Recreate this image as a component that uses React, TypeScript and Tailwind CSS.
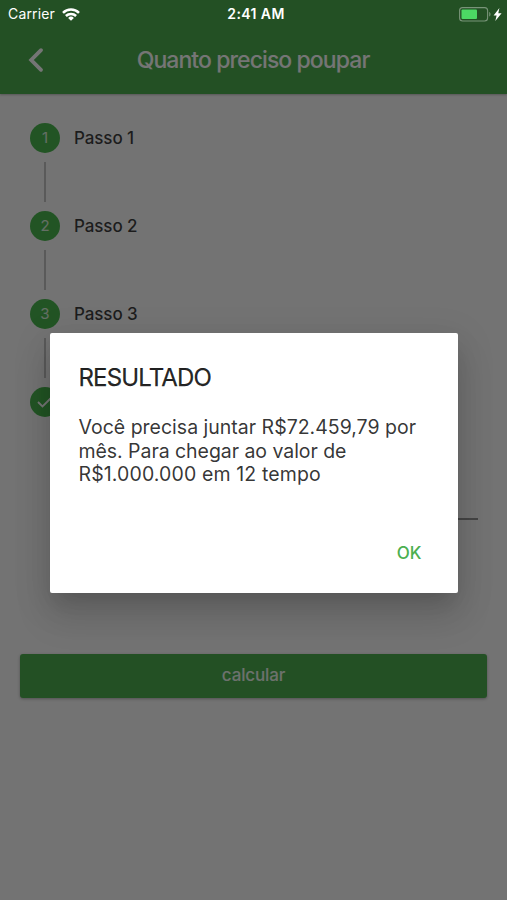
import React from 'react';

interface StepItem {
  id: number;
  label: string;
}

const steps: StepItem[] = [
  { id: 1, label: 'Passo 1' },
  { id: 2, label: 'Passo 2' },
  { id: 3, label: 'Passo 3' },
];

const StatusBar: React.FC = () => (
  <div className="absolute inset-x-0 top-0 z-20 grid h-7 grid-cols-3 items-center pl-[8px] pr-[5px] text-white">
    <div className="flex items-center gap-[7px]">
      <span className="text-[14px] leading-7 tracking-[0.15px]">Carrier</span>
      <svg width="18" height="13" viewBox="0 0 18 13" fill="none" stroke="currentColor" strokeWidth="2.5">
        <path d="M1 4.8a11.4 11.4 0 0 1 16 0" />
        <path d="M3.9 8a7.2 7.2 0 0 1 10.2 0" />
        <path d="M9 12.8 6.1 9.9a4.2 4.2 0 0 1 5.8 0Z" fill="currentColor" stroke="none" />
      </svg>
    </div>
    <span className="pl-[2px] text-center text-[14px] font-semibold leading-7 tracking-[0.4px]">2:41 AM</span>
    <div className="flex items-center justify-end gap-[2px]">
      <svg width="32" height="15" viewBox="0 0 32 15" fill="none">
        <rect x="0.6" y="0.6" width="28" height="13.4" rx="3" stroke="#799479" strokeWidth="1.1" />
        <rect x="2.5" y="2.5" width="15.5" height="9.6" rx="1" fill="#4cd964" />
        <path d="M30.2 5v4.6c1.8-.7 1.8-3.9 0-4.6Z" fill="#799479" />
      </svg>
      <svg width="9" height="13" viewBox="0 0 9 13" fill="currentColor">
        <path d="M6.4 0 .6 7.4h3L2.3 13 8.6 5.3H5.3Z" />
      </svg>
    </div>
  </div>
);

const Header: React.FC = () => (
  <header className="relative flex h-[94px] items-start bg-[#4caf50] pt-[26px] shadow-[0_1px_2px_rgba(0,0,0,0.25)]">
    <button className="flex h-[68px] w-[71px] items-center justify-center" aria-label="Voltar">
      <svg
        width="16"
        height="26"
        viewBox="0 0 16 26"
        fill="none"
        stroke="white"
        strokeWidth="3.8"
        strokeLinecap="round"
      >
        <path d="M13 3.2 3.2 13 13 22.8" />
      </svg>
    </button>
    <h1 className="flex-1 pr-[72px] text-center text-[23px] font-medium leading-[68px] tracking-[-0.92px] text-white">
      Quanto preciso poupar
    </h1>
  </header>
);

const Stepper: React.FC = () => (
  <div className="flex flex-col pl-[30px] pt-[29px]">
    {steps.map((step) => (
      <div key={step.id} className="h-[88px]">
        <div className="flex items-center gap-[14px]">
          <span className="flex size-[30px] items-center justify-center rounded-full bg-[#4bb850] text-[15px] text-white/80">
            {step.id}
          </span>
          <span className="text-[17px] font-medium leading-[30px] tracking-[-0.1px] text-black/75">{step.label}</span>
        </div>
        <div className="ml-[14px] mt-[9px] h-10 w-[1.5px] bg-[#c4c4c4]" />
      </div>
    ))}
    <span className="flex size-[30px] items-center justify-center rounded-full bg-[#4bb850]">
      <svg width="18" height="14" viewBox="0 0 18 14" fill="none" stroke="white" strokeWidth="1.8">
        <path d="m2 7 4.5 4.5L16 2" />
      </svg>
    </span>
  </div>
);

const ResultDialog: React.FC = () => (
  <div className="absolute inset-0 z-10 flex items-start justify-center bg-black/54 pt-[333px]">
    <div
      role="dialog"
      className="flex h-[260px] w-[408px] flex-col rounded-[2px] bg-white px-[29px] shadow-[0_13px_18px_-8px_rgba(0,0,0,0.12),0_24px_36px_2px_rgba(0,0,0,0.1),0_9px_36px_6px_rgba(0,0,0,0.08)]"
    >
      <h2 className="pt-[28.5px] text-[24px] leading-8 tracking-[-0.85px] text-black/87 [-webkit-text-stroke:0.25px]">
        RESULTADO
      </h2>
      <p className="mt-[22.5px] whitespace-nowrap text-[19.5px] leading-[23.5px] text-black/80">
        Você precisa juntar R$72.459,79 por
        <br />
        <span className="tracking-[-0.05px]">mês. Para chegar ao valor de</span>
        <br />
        <span className="tracking-[0.12px]">R$1.000.000 em 12 tempo</span>
      </p>
      <div className="mt-auto flex justify-end pb-[28px] pr-[7px]">
        <button className="text-[17px] font-medium leading-6 text-[#4caf50]">OK</button>
      </div>
    </div>
  </div>
);

export default function App() {
  return (
    <div className="relative flex h-[900px] w-[507px] flex-col overflow-hidden bg-[#fafafa] font-['Inter',sans-serif]">
      <StatusBar />
      <Header />
      <Stepper />
      <div className="ml-[75px] mr-[29px] mt-[101px] h-[1.5px] bg-black/40" />
      <button className="mx-5 mt-[134px] h-11 rounded-[3px] bg-[#4caf50] text-[17px] font-medium tracking-[-0.15px] text-white/90 shadow-[0_1px_3px_rgba(0,0,0,0.3)]">
        calcular
      </button>
      <ResultDialog />
    </div>
  );
}
